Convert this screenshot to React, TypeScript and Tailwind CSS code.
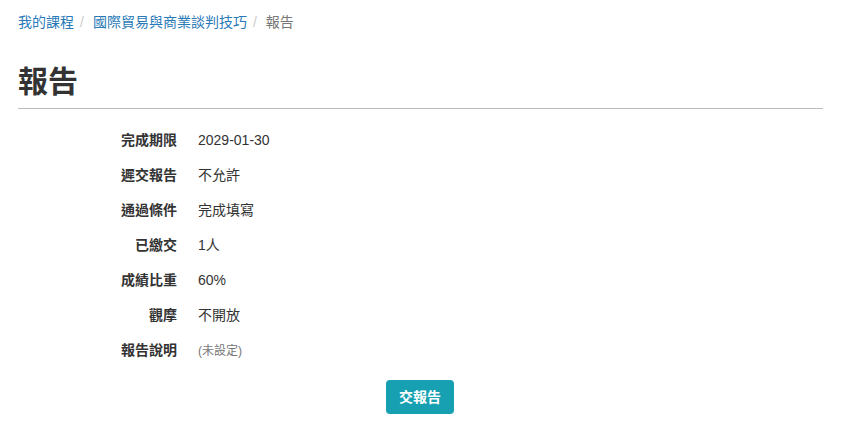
import React from "react";

const rows: [string, React.ReactNode][] = [
  ["完成期限", "2029-01-30"],
  ["遲交報告", "不允許"],
  ["通過條件", "完成填寫"],
  ["已繳交", "1人"],
  ["成績比重", "60%"],
  ["觀摩", "不開放"],
  ["報告說明", <span className="text-[12px] text-[#777]">(未設定)</span>],
];

export default function App() {
  return (
    <div
      className="w-[842px] h-[442px] bg-white text-[#333] px-[18px] pt-[12px]"
      style={{ fontFamily: '"Helvetica Neue", "Liberation Sans", "Noto Sans CJK TC", sans-serif' }}
    >
      <nav className="flex items-center text-[14px] leading-[20px] h-[20px]">
        <a className="text-[#2a7ab8]">我的課程</a>
        <span className="pl-[6px] pr-[9px] text-[#ccc]">/</span>
        <a className="text-[#2a7ab8]">國際貿易與商業談判技巧</a>
        <span className="pl-[6px] pr-[9px] text-[#ccc]">/</span>
        <span className="text-[#777]">報告</span>
      </nav>
      <h1 className="mt-[30px] text-[30px] font-bold leading-[40px] text-[#333]">報告</h1>
      <div className="mt-[6px] border-b border-[#bbb] w-[805px]" />
      <div className="mt-[14px] flex flex-col">
        {rows.map(([k, v]) => (
          <div key={k} className="flex items-center h-[35px] text-[14px]">
            <div className="w-[159px] text-right font-bold pr-0">{k}</div>
            <div className="pl-[21px]">{v}</div>
          </div>
        ))}
      </div>
      <div className="flex justify-center mt-[12px] pr-[2px]">
        <button className="h-[34px] px-[13px] rounded-[4px] bg-[#16a0b2] text-white text-[14px] font-bold">
          交報告
        </button>
      </div>
    </div>
  );
}
